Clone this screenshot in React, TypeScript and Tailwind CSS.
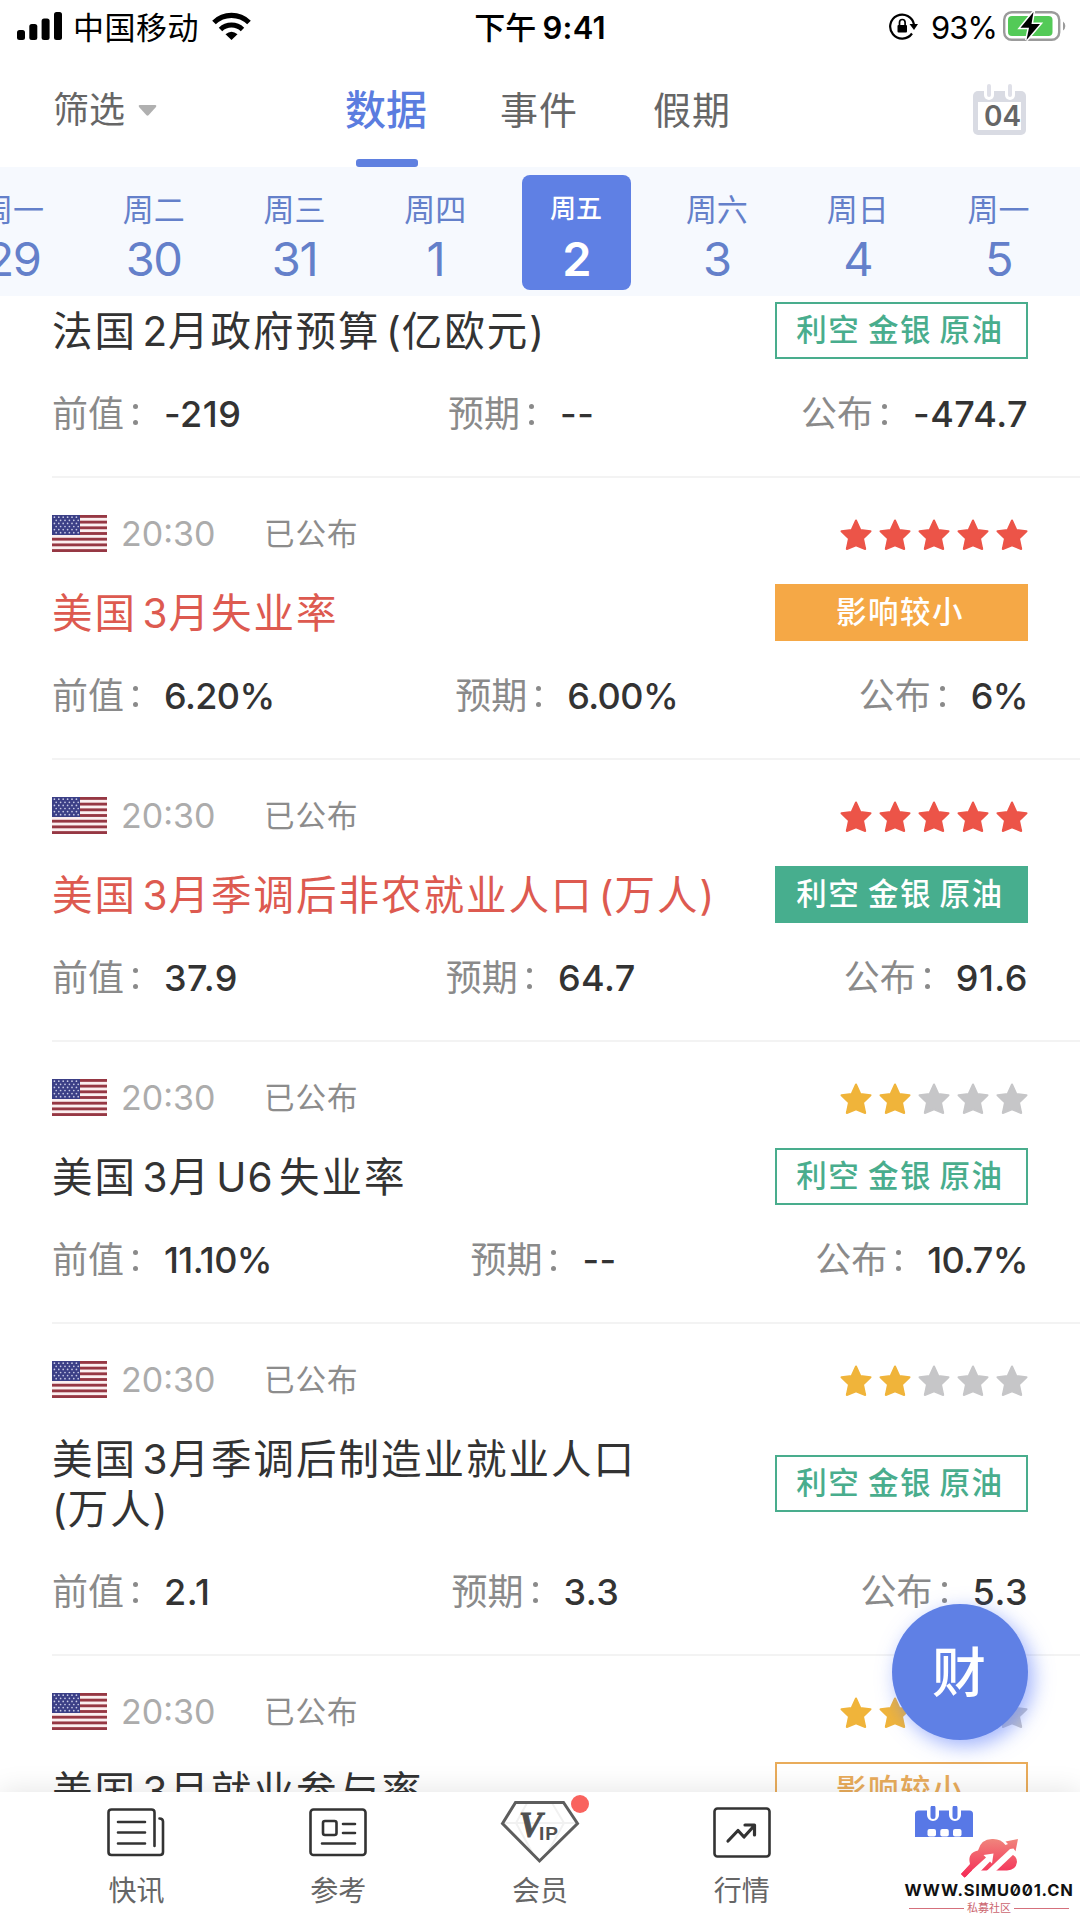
import React from 'react';

type BadgeKind = 'green-outline' | 'green' | 'orange' | 'orange-outline';

interface DataItem {
  title: string;
  important?: boolean;
  stars: number;
  badge: string;
  badgeKind: BadgeKind;
  previous: string;
  forecast: string;
  actual: string;
}

const days = [
  { week: '周一', day: '29' },
  { week: '周二', day: '30' },
  { week: '周三', day: '31' },
  { week: '周四', day: '1' },
  { week: '周五', day: '2', active: true },
  { week: '周六', day: '3' },
  { week: '周日', day: '4' },
  { week: '周一', day: '5' },
];

const items: DataItem[] = [
  { title: '法国 2月政府预算 (亿欧元)', stars: 2, badge: '利空 金银 原油', badgeKind: 'green-outline', previous: '-219', forecast: '--', actual: '-474.7' },
  { title: '美国 3月失业率', important: true, stars: 5, badge: '影响较小', badgeKind: 'orange', previous: '6.20%', forecast: '6.00%', actual: '6%' },
  { title: '美国 3月季调后非农就业人口 (万人)', important: true, stars: 5, badge: '利空 金银 原油', badgeKind: 'green', previous: '37.9', forecast: '64.7', actual: '91.6' },
  { title: '美国 3月 U6 失业率', stars: 2, badge: '利空 金银 原油', badgeKind: 'green-outline', previous: '11.10%', forecast: '--', actual: '10.7%' },
  { title: '美国 3月季调后制造业就业人口\n(万人)', stars: 2, badge: '利空 金银 原油', badgeKind: 'green-outline', previous: '2.1', forecast: '3.3', actual: '5.3' },
  { title: '美国 3月就业参与率', stars: 2, badge: '影响较小', badgeKind: 'orange-outline', previous: '61.4%', forecast: '--', actual: '61.5%' },
];

const badgeStyles: Record<BadgeKind, string> = {
  'green-outline': 'border-[#49ad8d] text-[#49ad8d]',
  green: 'border-[#47ae8e] bg-[#47ae8e] text-white',
  orange: 'border-[#f5a846] bg-[#f5a846] text-white',
  'orange-outline': 'border-[#e9ac5b] text-[#e9ac5b]',
};

const StatusBar = () => (
  <div className="flex h-[52px] shrink-0 items-center pl-[17px] pr-[14px] text-[31px] leading-none text-black">
    <div className="flex flex-1 items-center">
      <svg width="45" height="28" viewBox="0 0 45 28" className="mr-[11px]">
        <rect x="0" y="18" width="8" height="10" rx="2.5" />
        <rect x="12.3" y="12" width="8" height="16" rx="2.5" />
        <rect x="24.6" y="6.500" width="8" height="21.500" rx="2.5" />
        <rect x="37" y="0" width="8" height="28" rx="2.5" />
      </svg>
      <span className="pt-[2px] tracking-[0.5px]">中国移动</span>
      <svg width="39" height="29" viewBox="0 0 39 29" className="ml-[13px] -mt-[2px]" fill="none" stroke="#000">
        <path d="M2 11.500 A25 25 0 0 1 37 11.500" strokeWidth="5.200" />
        <path d="M8.500 18.500 A16 16 0 0 1 30.500 18.500" strokeWidth="5" />
        <path d="M13.500 23.300 Q19.500 18.300 25.500 23.300 L19.500 29 Z" fill="#000" stroke="none" />
      </svg>
    </div>
    <span className="pr-[3px] pt-[2px] font-semibold tracking-[0.2px]">
      <span className="mr-[6px] font-medium">下午</span>9:41
    </span>
    <div className="flex flex-1 items-center justify-end">
      <svg width="29" height="28" viewBox="0 0 29 28" className="mr-[13px]" fill="none" stroke="#000">
        <path d="M23 21.500 A12 12 0 1 1 25 12.500" strokeWidth="2.200" />
        <path d="M20.500 12 H29 L25 18 Z" fill="#000" stroke="none" />
        <rect x="8.500" y="13" width="9.500" height="7.500" rx="1" fill="#000" stroke="none" />
        <path d="M10.500 13 V10.500 a2.800 3 0 0 1 5.600 0 V13" strokeWidth="1.700" />
      </svg>
      <span className="pt-[2px] tracking-[-0.9px]">93%</span>
      <svg width="64" height="32" viewBox="0 0 64 32" className="ml-[6px] -mr-[1px]">
        <rect x="1.200" y="2.200" width="55" height="27.600" rx="7.500" fill="#fff" stroke="#9b9b9b" strokeWidth="2.400" />
        <rect x="5" y="6" width="44.500" height="20" rx="4" fill="#53ca57" />
        <path d="M60 11.500 a5.500 5.500 0 0 1 0 9z" fill="#9b9b9b" />
        <path d="M30.500 2 L17.500 17.800 H26 L23.500 30 L37 14 H28.500 Z" fill="#000" stroke="#fff" strokeWidth="3" paintOrder="stroke" />
      </svg>
    </div>
  </div>
);

const NavBar = () => (
  <div className="flex h-[115px] shrink-0 items-stretch pl-[53px] pr-[54px] text-[38px] leading-none text-[#666]">
    <div className="flex w-[292px] items-center pt-[1px] text-[36px]">
      筛选
      <svg width="19" height="11" viewBox="0 0 19 11" className="ml-[13px]">
        <path d="M1.500 0 H17.500 Q19 .5 18 2 L10.500 10.300 Q9.500 11 8.500 10.300 L1 2 Q0 .5 1.500 0Z" fill="#b0b0b0" />
      </svg>
    </div>
    <div className="relative flex items-center pt-[2px] text-[41px] font-medium text-[#5b7ddf]">
      数据
      <span className="absolute bottom-0 left-[11px] h-2 w-[62px] rounded-[3px] bg-[#5f80e0]" />
    </div>
    <div className="ml-[73px] flex items-center pt-[1px] tracking-[1px]">事件</div>
    <div className="ml-[75px] flex items-center pt-[1px] tracking-[1px]">假期</div>
    <div className="relative ml-auto mt-[32px] h-[52px] w-[53px]">
      <svg width="53" height="52" viewBox="0 0 53 52">
        <rect x="0" y="7" width="53" height="44" rx="5" fill="#d9dbe3" />
        <rect x="5" y="18" width="43" height="28" fill="#fff" />
        <rect x="11" y="-4" width="10" height="20" rx="5" fill="#fff" />
        <rect x="32" y="-4" width="10" height="20" rx="5" fill="#fff" />
        <rect x="14" y="0" width="4" height="13" rx="2" fill="#dfe0e8" />
        <rect x="35" y="0" width="4" height="13" rx="2" fill="#dfe0e8" />
      </svg>
      <span className="absolute left-[11px] top-[18px] text-[28px] font-semibold leading-[28px] text-[#666]">04</span>
    </div>
  </div>
);

const DayStrip = () => (
  <div className="flex h-[129px] shrink-0 bg-[#f6f9fe] pt-2">
    <div className="-ml-[57px] flex">
      {days.map((d, i) => (
        <div key={i} className="flex w-[140.8px] shrink-0 justify-center">
          <div
            className={`flex h-[115px] w-[109px] flex-col items-center rounded-lg pr-[1px] leading-none
              ${d.active ? 'bg-[#5f80e4] text-white' : 'text-[#6480ca]'}`}
          >
            <span className={`mt-[18px] flex h-[32px] items-center whitespace-nowrap ${d.active ? 'text-[26px] font-medium' : 'text-[31px]'}`}>
              {d.week}
            </span>
            <span className={`mt-[10px] text-[47px] leading-[48px] tracking-[-1.4px] ${d.active ? 'font-semibold' : ''}`}>{d.day}</span>
          </div>
        </div>
      ))}
    </div>
  </div>
);

const Flag = () => (
  <svg width="55" height="37" viewBox="0 0 55 37">
    <rect width="55" height="37" fill="#fbeff0" />
    {[0, 1, 2, 3, 4, 5, 6].map((n) => (
      <rect key={n} y={n * 5.69} width="55" height="2.85" fill="#963743" />
    ))}
    <rect width="28" height="20" fill="#3b3f86" />
    {[0, 1, 2, 3, 4, 5].map((r) =>
      [0, 1, 2, 3, 4, 5].map((c) => (
        <circle key={`${r}-${c}`} cx={2.4 + c * 4.4 + (r % 2) * 1.8} cy={2.2 + r * 3.1} r="0.85" fill="#c9cbe6" />
      ))
    )}
  </svg>
);

const Star = ({ color }: { color: string }) => (
  <svg width="32" height="32" viewBox="0 0 32 32">
    <path
      d="M16 1.500 L20.300 11 L30.500 12.300 L23 19.400 L25.200 30 L16 26.300 L6.800 30 L9 19.400 L1.500 12.300 L11.700 11 Z"
      fill={color}
      stroke={color}
      strokeWidth="2"
      strokeLinejoin="round"
    />
  </svg>
);

const Field = ({ label, value }: { label: string; value: string }) => {
  const tight = value.includes('%');
  return (
    <div className="flex items-center">
      <span className="text-[#8a8a8a]">{label}</span>
      <span className="ml-[9px] flex w-[7px] flex-col gap-[11px]">
        <i className="h-[5px] w-[5px] rounded-full bg-[#8a8a8a]" />
        <i className="h-[5px] w-[5px] rounded-full bg-[#8a8a8a]" />
      </span>
      <span className={`ml-[24px] font-medium text-[#333] ${tight ? 'tracking-[-0.6px]' : 'tracking-[0.5px]'}`}>{value}</span>
    </div>
  );
};

const Title = ({ text, important }: { text: string; important?: boolean }) => (
  <h3
    className={`whitespace-pre pt-[1px] text-[40.500px] font-normal leading-[50px] tracking-[2px] [word-spacing:-8px]
      ${important ? 'text-[#dd5a50]' : 'text-[#333]'}`}
  >
    {text.split(/([0-9A-Z()]+)/).map((part, i) => (
      <span key={i} className={i % 2 ? 'tracking-[1px]' : ''}>{part}</span>
    ))}
  </h3>
);

const DataRow = ({ item }: { item: DataItem }) => {
  const starColor = item.stars === 5 ? '#ec5448' : '#f0b43a';
  return (
    <div className="ml-[52px] shrink-0 border-b-2 border-[#f3f3f3] pb-[37px] pr-[52px] pt-[31px]">
      <div className="flex h-[48px] items-center leading-none">
        <Flag />
        <span className="ml-[14px] w-[143px] pt-[1px] text-[34px] text-[#acacac]">20:30</span>
        <span className="pt-[2px] text-[30.500px] tracking-[1px] text-[#8c8c8c]">已公布</span>
        <div className="ml-auto flex gap-[7px] pt-[4px]">
          {[0, 1, 2, 3, 4].map((n) => (
            <Star key={n} color={n < item.stars ? starColor : '#c6c6c8'} />
          ))}
        </div>
      </div>
      <div className="mt-[31px] flex items-center justify-between">
        <Title text={item.title} important={item.important} />
        <span
          className={`-mb-1 -mt-[7px] flex h-[57px] w-[253px] items-center justify-center whitespace-nowrap border-2 pr-[3px] text-[30.500px] font-medium leading-none tracking-[1.500px] [word-spacing:-2px]
            ${badgeStyles[item.badgeKind]}`}
        >
          {item.badge}
        </span>
      </div>
      <div className="mt-[32px] flex h-[50px] items-center justify-between text-[36px] leading-none">
        <Field label="前值" value={item.previous} />
        <Field label="预期" value={item.forecast} />
        <Field label="公布" value={item.actual} />
      </div>
    </div>
  );
};

const NewsIcon = () => (
  <svg width="58" height="49" viewBox="0 0 58 49" fill="none" stroke="#333" strokeWidth="2.600" strokeLinecap="round">
    <path d="M47.500 38 V4.500 Q47.500 1.500 44.500 1.500 H4.500 Q1.500 1.500 1.500 4.500 V44 Q1.500 47 4.500 47 H53 Q56 47 56 44 V13.500 Q56 10.500 52.500 10.500" />
    <path d="M11 14 H38 M11 24.500 H38 M11 35.500 H38" />
  </svg>
);

const ReferenceIcon = () => (
  <svg width="58" height="49" viewBox="0 0 58 49" fill="none" stroke="#333" strokeWidth="2.600" strokeLinecap="round">
    <rect x="1.500" y="1.500" width="55" height="45.500" rx="3" />
    <rect x="14" y="13" width="13.500" height="14" rx="2" />
    <path d="M34 16 H46 M34 25 H46 M13 35.500 H46" />
  </svg>
);

const VipIcon = () => (
  <div className="relative">
    <svg width="80" height="64" viewBox="0 0 80 64" fill="none">
      <path d="M27 3 L16 23 L32 52 M52 3 L64 23 L48 52 M2 23 H78" stroke="#f1f1f1" strokeWidth="2" />
      <path d="M15.500 2.500 H63.500 L77.500 23.500 L39.500 61 L2.500 23.500 Z" stroke="#5d5d5d" strokeWidth="3" />
    </svg>
    <span className="absolute left-[19px] top-[8px] text-[35px] font-bold italic leading-[35px] text-[#505050] [-webkit-text-stroke:1px_#505050] [font-family:'Liberation_Serif',serif]">V</span>
    <span className="absolute left-[39px] top-[24px] text-[19px] font-bold leading-[19px] tracking-[1px] text-[#505050] [font-family:'Liberation_Sans',sans-serif]">IP</span>
    <span className="absolute -right-[9px] -top-[5px] h-[18px] w-[18px] rounded-full bg-[#f9635e]" />
  </div>
);

const MarketIcon = () => (
  <svg width="58" height="51" viewBox="0 0 58 51" fill="none" stroke="#333">
    <rect x="1.500" y="1.500" width="55" height="48" rx="3" strokeWidth="2.600" />
    <path d="M15 34 L25 23.500 L31 30 L40.500 19.500 M32 18 H41.500 V28" strokeWidth="3.200" strokeLinecap="round" strokeLinejoin="round" />
  </svg>
);

const CalendarTabIcon = () => (
  <svg width="58" height="31" viewBox="0 0 58 31">
    <path d="M0 31 V8 Q0 4.500 3.500 4.500 H54.500 Q58 4.500 58 8 V31Z" fill="#5878e6" />
    <path d="M12 0 H24 V9 a6 6 0 0 1 -12 0Z M34 0 H46 V9 a6 6 0 0 1 -12 0Z" fill="#fff" />
    <path d="M18 2 V10.500 M40 2 V10.500" stroke="#5878e6" strokeWidth="5" strokeLinecap="round" />
    <rect x="12.500" y="23" width="8.500" height="7.500" rx="2" fill="#fff" />
    <rect x="25.300" y="23" width="8.500" height="7.500" rx="2" fill="#fff" />
    <rect x="38" y="23" width="8.500" height="7.500" rx="2" fill="#fff" />
  </svg>
);

const tabs = [
  { label: '快讯', icon: NewsIcon },
  { label: '参考', icon: ReferenceIcon },
  { label: '会员', icon: VipIcon },
  { label: '行情', icon: MarketIcon },
];

const SiteMark = () => (
  <div className="absolute bottom-0 right-0 flex h-[83px] w-[182px] flex-col items-center">
    <svg width="60" height="42" viewBox="0 0 60 42">
      <defs>
        <linearGradient id="cloud" gradientUnits="userSpaceOnUse" x1="0" y1="2" x2="0" y2="38">
          <stop offset="0" stopColor="#f0857c" />
          <stop offset="1" stopColor="#f52f58" />
        </linearGradient>
      </defs>
      <path
        d="M59 2 L56.500 14.500 L54 12.500 L51 17 Q58 18.500 58 25 Q57 33 48 33.500 H22 L5.500 40.500 L2 37 L11 27 Q8 16 19 13.500 Q22 2 33 2 Q42 1.500 46.500 8 L49 7 L46.500 4.500 Z"
        fill="url(#cloud)"
      />
      {/* arrow inside the cloud, then the diagonal cut to its right */}
      <path d="M5 42 H14 L31 24.500 L33 26.500 L34.500 16.500 L24.500 18 L27 20.500 L11 35 Z" fill="#fff" />
      <path d="M27 34.500 H36.500 L57 15 L54.500 11.500 L51 12 Z" fill="#fff" />
      <path d="M2 37 L11 28 L13 33.500 L5.500 40.500 Z" fill="url(#cloud)" />
    </svg>
    <span className="mt-[3px] whitespace-nowrap text-[16.500px] font-bold leading-[17px] tracking-[0.8px] text-[#111] [font-feature-settings:'zero']">WWW.SIMU001.CN</span>
    <div className="mt-[2px] flex w-[160px] items-center gap-[3px] text-[11px] leading-[14px] text-[#cc6670]">
      <i className="h-px flex-1 bg-[#d5707c]" />
      私募社区
      <i className="h-px flex-1 bg-[#d5707c]" />
    </div>
  </div>
);

const TabBar = () => (
  <nav className="relative flex h-[128px] shrink-0 bg-white px-9 shadow-[0_-2px_26px_rgba(0,0,0,0.1)]">
    {tabs.map((tab) => {
      const Icon = tab.icon;
      return (
        <div key={tab.label} className="flex flex-1 flex-col items-center pr-[1px] pt-[5px] text-[28px] leading-none text-[#666]">
          <div className="flex h-[70px] items-center">
            <Icon />
          </div>
          <span className="mt-[10px]">{tab.label}</span>
        </div>
      );
    })}
    <div className="flex flex-1 flex-col items-center pt-[14px]">
      <CalendarTabIcon />
    </div>
    <SiteMark />
  </nav>
);

export default function App() {
  return (
    <div className="relative flex h-[1920px] w-[1080px] flex-col overflow-hidden bg-white [font-family:Inter,'Noto_Sans_CJK_SC',sans-serif]">
      <StatusBar />
      <NavBar />
      <DayStrip />
      <main className="min-h-0 flex-1 overflow-hidden">
        <div className="-mt-[100px] flex flex-col">
          {items.map((item) => (
            <DataRow key={item.title} item={item} />
          ))}
        </div>
      </main>
      <TabBar />
      <button className="absolute bottom-[180px] right-[52px] flex h-[136px] w-[136px] items-center justify-center rounded-full bg-[#5f80e5] pr-[2px] pt-[4px] text-[54px] font-medium leading-none text-white shadow-[5px_6px_20px_rgba(80,115,250,0.55)]">
        财
      </button>
    </div>
  );
}
